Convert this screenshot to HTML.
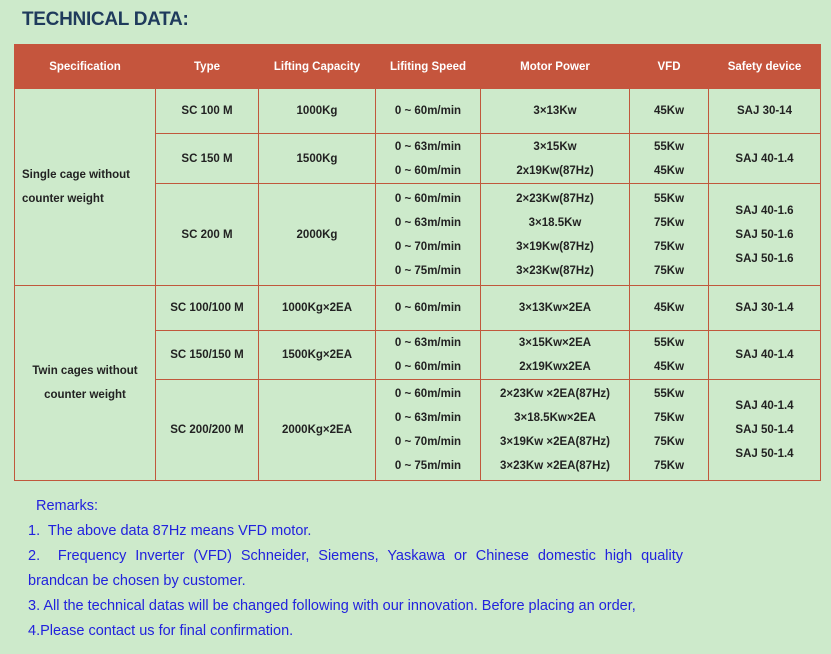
<!DOCTYPE html>
<html><head><meta charset="utf-8"><style>
body{margin:0;width:831px;height:654px;background:#cdeacb;font-family:"Liberation Sans",sans-serif;overflow:hidden;position:relative}
h1{position:absolute;left:22px;top:9px;margin:0;font-size:19px;color:#1f3b5c;font-weight:bold;letter-spacing:-0.3px}
table{position:absolute;left:14px;top:44px;border-collapse:collapse;table-layout:fixed;width:806px}
td,th{border:1px solid #c0583c;text-align:center;font-size:11.5px;font-weight:bold;color:#222;line-height:24px;padding:0;overflow:hidden}
th{background:#c5553d;color:#fff;border-color:#c5553d;height:43px}
td.l{text-align:left;padding-left:7px}
.rem{position:absolute;left:28px;top:494px;width:655px;font-size:14.5px;color:#2222dd;line-height:25px;text-align:justify}
</style></head><body>
<h1>TECHNICAL DATA:</h1>
<table>
<colgroup><col style="width:141px"><col style="width:103px"><col style="width:117px"><col style="width:105px"><col style="width:149px"><col style="width:79px"><col style="width:112px"></colgroup>
<tr><th>Specification</th><th>Type</th><th>Lifting Capacity</th><th>Lifiting Speed</th><th>Motor Power</th><th>VFD</th><th>Safety device</th></tr>
<tr style="height:45px"><td rowspan="3" class="l">Single cage without<br>counter weight</td><td>SC 100 M</td><td>1000Kg</td><td>0 ~ 60m/min</td><td>3×13Kw</td><td>45Kw</td><td>SAJ 30-14</td></tr>
<tr style="height:50px"><td>SC 150 M</td><td>1500Kg</td><td>0 ~ 63m/min<br>0 ~ 60m/min</td><td>3×15Kw<br>2x19Kw(87Hz)</td><td>55Kw<br>45Kw</td><td>SAJ 40-1.4</td></tr>
<tr style="height:102px"><td>SC 200 M</td><td>2000Kg</td><td>0 ~ 60m/min<br>0 ~ 63m/min<br>0 ~ 70m/min<br>0 ~ 75m/min</td><td>2×23Kw(87Hz)<br>3×18.5Kw<br>3×19Kw(87Hz)<br>3×23Kw(87Hz)</td><td>55Kw<br>75Kw<br>75Kw<br>75Kw</td><td>SAJ 40-1.6<br>SAJ 50-1.6<br>SAJ 50-1.6</td></tr>
<tr style="height:45px"><td rowspan="3">Twin cages without<br>counter weight</td><td>SC 100/100 M</td><td>1000Kg×2EA</td><td>0 ~ 60m/min</td><td>3×13Kw×2EA</td><td>45Kw</td><td>SAJ 30-1.4</td></tr>
<tr style="height:49px"><td>SC 150/150 M</td><td>1500Kg×2EA</td><td>0 ~ 63m/min<br>0 ~ 60m/min</td><td>3×15Kw×2EA<br>2x19Kwx2EA</td><td>55Kw<br>45Kw</td><td>SAJ 40-1.4</td></tr>
<tr style="height:101px"><td>SC 200/200 M</td><td>2000Kg×2EA</td><td>0 ~ 60m/min<br>0 ~ 63m/min<br>0 ~ 70m/min<br>0 ~ 75m/min</td><td>2×23Kw ×2EA(87Hz)<br>3×18.5Kw×2EA<br>3×19Kw ×2EA(87Hz)<br>3×23Kw ×2EA(87Hz)</td><td>55Kw<br>75Kw<br>75Kw<br>75Kw</td><td>SAJ 40-1.4<br>SAJ 50-1.4<br>SAJ 50-1.4</td></tr>
</table>
<div class="rem">
<div style="padding-left:8px">Remarks:</div>
<div>1.&nbsp; The above data 87Hz means VFD motor.</div>
<div style="text-align:justify;text-align-last:justify">2.&nbsp; Frequency Inverter (VFD) Schneider, Siemens, Yaskawa or Chinese domestic high quality</div>
<div>brandcan be chosen by customer.</div>
<div style="white-space:nowrap">3. All the technical datas will be changed following with our innovation. Before placing an order,</div>
<div>4.Please contact us for final confirmation.</div>
</div>
</body></html>
